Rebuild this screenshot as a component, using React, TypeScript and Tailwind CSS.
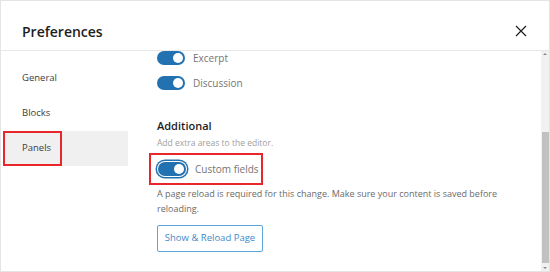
import React from 'react';

const font = { fontFamily: '"Open Sans", "Noto Sans", sans-serif' };

const Toggle = ({ focused = false }: { focused?: boolean }) => (
  <span
    className={`inline-flex shrink-0 rounded-full ${
      focused ? 'p-[1px] ring-[1.5px] ring-[#2271b1]' : ''
    }`}
  >
    <span className="flex h-[14px] w-[28px] items-center justify-end rounded-full bg-[#2271b1] pr-[2px]">
      <span className="h-[10px] w-[10px] rounded-full bg-white" />
    </span>
  </span>
);

const NavItem = ({ label, active = false }: { label: string; active?: boolean }) => (
  <div
    className={`relative flex h-[35px] items-center pl-[19px] text-[9.5px] text-[#3c3c3c] ${
      active ? 'bg-[#f0f0f0]' : ''
    }`}
  >
    {label}
    {active && (
      <span className="absolute left-0 top-0 h-full w-[59px] border-2 border-[#e8262b]" />
    )}
  </div>
);

export default function App() {
  return (
    <div
      className="flex h-[272px] w-[550px] flex-col overflow-hidden border border-[#e4e4e4] bg-white"
      style={font}
    >
      {/* header */}
      <div className="flex h-[50px] shrink-0 items-center justify-between border-b border-[#e8e8e8] pl-[21px] pr-[22px] pt-[11px]">
        <h1 className="text-[14px] font-semibold text-[#1e1e1e]">Preferences</h1>
        <svg width="12" height="12" viewBox="0 0 12 12" className="text-[#1e1e1e]">
          <path d="M1 1L11 11M11 1L1 11" stroke="currentColor" strokeWidth="1.2" />
        </svg>
      </div>

      <div className="flex min-h-0 flex-1">
        {/* sidebar */}
        <nav className="w-[127px] shrink-0 pl-[2px] pt-[10px]">
          <NavItem label="General" />
          <NavItem label="Blocks" />
          <NavItem label="Panels" active />
        </nav>

        {/* content */}
        <div className="min-w-0 flex-1 pl-[29px] pt-0">
          <div className="flex h-[14px] items-center gap-[8px] text-[10px] text-[#757575]">
            <Toggle />
            <span>Excerpt</span>
          </div>
          <div className="mt-[11px] flex h-[14px] items-center gap-[8px] text-[10px] text-[#757575]">
            <Toggle />
            <span>Discussion</span>
          </div>

          <h2 className="mt-[29px] text-[11px] font-semibold leading-[14px] text-[#1e1e1e]">
            Additional
          </h2>
          <p className="mt-[4px] text-[8.5px] leading-[12px] text-[#a0a0a0]">
            Add extra areas to the editor.
          </p>

          <div className="-ml-[8px] mt-[4px] flex h-[32px] w-[114px] items-center gap-[8px] border-2 border-[#e8262b] pl-[6px] text-[10px] text-[#757575]">
            <Toggle focused />
            <span>Custom fields</span>
          </div>

          <p className="mt-[1px] text-[9px] leading-[15px] text-[#6b6b6b]">
            A page reload is required for this change. Make sure your content is saved before
            <br />
            reloading.
          </p>

          <button className="mt-[9px] h-[27px] w-[106px] rounded-[2px] border border-[#5aa5dc] text-[9.5px] text-[#3a8bcc]">
            Show &amp; Reload Page
          </button>
        </div>

        {/* scrollbar */}
        <div className="flex w-[8px] shrink-0 flex-col bg-[#f1f1f1]">
          <div className="flex h-[8px] items-start justify-center pt-[2px]">
            <span className="h-0 w-0 border-x-[2px] border-b-[2px] border-x-transparent border-b-[#8a8a8a]" />
          </div>
          <div className="flex-1" />
          <div className="mx-[0.5px] h-[131px] bg-[#c1c1c1]" />
          <div className="flex h-[8px] items-end justify-center pb-[2px]">
            <span className="h-0 w-0 border-x-[2px] border-t-[2px] border-x-transparent border-t-[#8a8a8a]" />
          </div>
        </div>
      </div>
    </div>
  );
}
